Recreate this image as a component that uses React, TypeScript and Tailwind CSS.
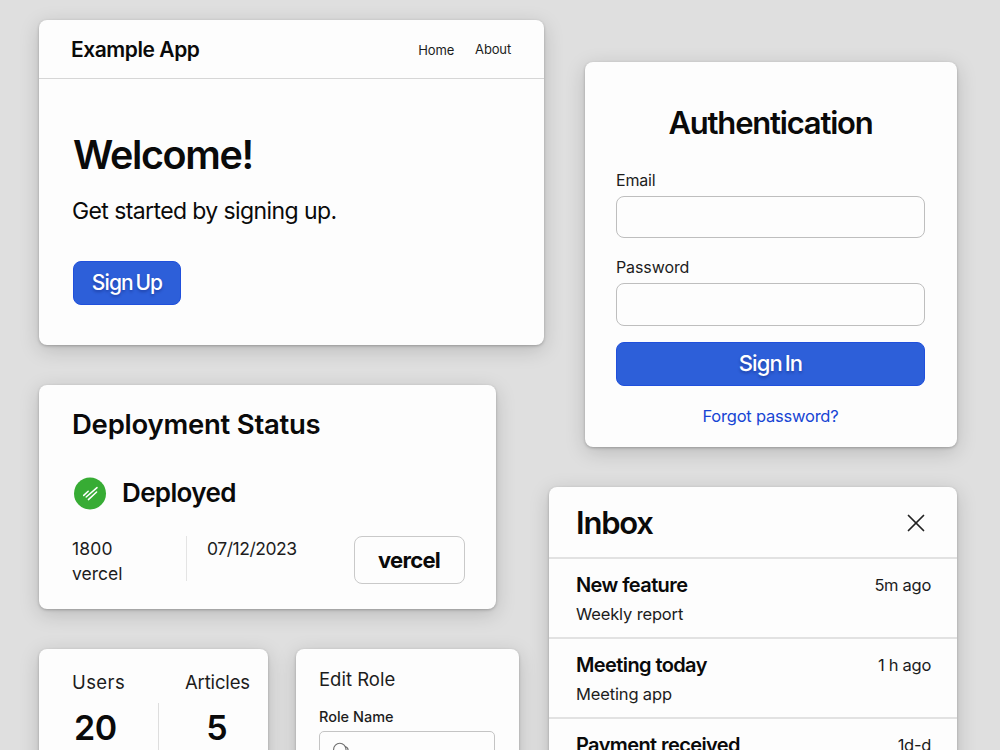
import { X } from 'lucide-react';

const MESSAGES = [
  { title: 'New feature', body: 'Weekly report', time: '5m ago' },
  { title: 'Meeting today', body: 'Meeting app', time: '1 h ago' },
  { title: 'Payment received', body: '', time: '1d-d' },
];

const CARD = 'shrink-0 bg-[#fdfdfd] rounded-[8px] shadow-[0_1px_3px_rgba(0,0,0,0.24),0_5px_20px_rgba(0,0,0,0.17)]';

function WelcomeCard() {
  return (
    <section className={`${CARD} h-[325px] w-[505px]`}>
      <header className="flex h-[59px] items-center justify-between border-b border-[#d6d6d6] pl-8 pr-[33px] pt-0.5">
        <h1 className="text-[21px] font-semibold tracking-[-0.45px]">Example App</h1>
        <nav className="flex gap-[21px] text-[13px] tracking-[-0.15px] text-[#1c1c1c]">
          <a className="pt-px">Home</a>
          <a>About</a>
        </nav>
      </header>
      <div className="pl-[34px] pt-[51px]">
        <h2 className="text-[39.5px] font-semibold leading-[51px] tracking-[-1.35px]">Welcome!</h2>
        <p className="-ml-px mt-[15px] text-[23px] leading-[31px] tracking-[-0.6px]">Get started by signing up.</p>
        <button className="mt-[34px] block h-[44px] w-[108px] rounded-[8px] border border-[#2050dc] bg-[#2d5fd9] text-[21px] font-medium tracking-[-0.9px] text-white [word-spacing:-2px] text-shadow-[0_2px_3px_rgba(0,0,60,0.3)]">
          Sign Up
        </button>
      </div>
    </section>
  );
}

function DeploymentCard() {
  return (
    <section className={`${CARD} mt-10 h-[224px] w-[457px] pl-[33px] pr-[31px] pt-[21px]`}>
      <h2 className="text-[27.5px] font-semibold leading-[36px] tracking-[-0.24px]">Deployment Status</h2>
      <div className="mt-[35px] flex h-8 items-center gap-4 pl-0.5">
        <svg width="33" height="33" viewBox="0 0 33 33" fill="none">
          <circle cx="16" cy="16.5" r="16" fill="#37ac34" />
          <g stroke="#fff" strokeWidth="1.5" strokeLinecap="round">
            <path d="M9.700 18.400L14.200 14.200" />
            <path d="M12.200 20L23 10.600" />
            <path d="M14.400 22.600L22.600 15" />
          </g>
        </svg>
        <span className="-mt-0.5 -ml-px text-[26px] font-semibold tracking-[-0.65px]">Deployed</span>
      </div>
      <div className="mt-[27px] flex items-start text-[17.5px] leading-[25px] text-[#1c1c1c]">
        <div className="h-[46px] w-[114px]">
          <span className="tracking-[0.2px]">1800</span>
          <br />
          vercel
        </div>
        <div className="h-[45px] w-[168px] border-l border-[#e4e4e4] pl-5 tracking-[-0.45px]">07/12/2023</div>
        <div className="flex h-[48px] w-[111px] items-center justify-center rounded-[8px] border border-[#c9c9c9] pr-px text-[22px] font-bold tracking-[-0.7px] text-[#0a0a0a]">
          vercel
        </div>
      </div>
    </section>
  );
}

function StatsCard() {
  return (
    <section className={`${CARD} flex h-[160px] w-[229px] pt-[21px]`}>
      <div className="w-[120px] pl-[33px]">
        <p className="text-[18.5px] leading-6 tracking-[0.4px] text-[#1c1c1c]">Users</p>
        <div className="mt-[9px] h-[60px] border-r border-[#dedede]">
          <p className="pl-[2px] pt-1 text-[34px] font-semibold leading-[42px] tracking-[-0.5px]">20</p>
        </div>
      </div>
      <div className="w-[109px] pl-[26px]">
        <p className="text-[18.5px] leading-6 tracking-[-0.15px] text-[#1c1c1c]">Articles</p>
        <p className="mt-[13px] w-[64px] text-center text-[34px] font-semibold leading-[42px]">5</p>
      </div>
    </section>
  );
}

function EditRoleCard() {
  return (
    <section className={`${CARD} h-[160px] w-[223px] px-[23px] pt-[18px]`}>
      <h3 className="text-[18.5px] leading-6 text-[#1c1c1c]">Edit Role</h3>
      <p className="mt-4 text-[14.5px] font-medium leading-5 text-[#1c1c1c]">Role Name</p>
      <div className="mt-1 h-[42px] w-[176px] rounded-[5px] border border-[#c4c4c4] pl-3 pt-[10px]">
        <svg width="20" height="18" viewBox="0 0 20 18" fill="none" stroke="#6f6f6f" strokeWidth="1.1">
          <circle cx="7.8" cy="7.500" r="6.200" />
          <path d="M12.800 4.600c1.800.200 3.200 1.600 3.400 3.800M12.400 11.800l5 5" />
        </svg>
      </div>
    </section>
  );
}

function AuthCard() {
  return (
    <section className={`${CARD} h-[385px] w-[372px] pl-[31px] pr-8 pt-[41px]`}>
      <h2 className="text-center text-[31px] font-semibold leading-10 tracking-[-1.2px]">Authentication</h2>
      <label className="mt-[27px] block text-[16px] leading-5 tracking-[-0.2px] text-[#1c1c1c]">Email</label>
      <input className="mt-1.5 block h-[42px] w-full rounded-[8px] border border-[#bebebe]" />
      <label className="mt-[19px] block text-[16px] leading-5 tracking-[-0.1px] text-[#1c1c1c]">Password</label>
      <input className="mt-1.5 block h-[43px] w-full rounded-[8px] border border-[#bebebe]" />
      <button className="mt-4 block h-[44px] w-full rounded-[8px] border border-[#2050dc] bg-[#2d5fd9] pb-px text-[22px] font-medium tracking-[-0.9px] text-white [word-spacing:-2px] text-shadow-[0_2px_3px_rgba(0,0,60,0.3)]">
        Sign In
      </button>
      <a className="mt-5 block text-center text-[16.5px] leading-5 tracking-[-0.22px] text-[#1745d4]">Forgot password?</a>
    </section>
  );
}

function InboxCard() {
  return (
    <section className={`${CARD} mt-[39.5px] h-[330px] w-[408px]`}>
      <header className="flex h-[70px] items-center justify-between pl-[27px] pr-[26px] pt-[3px]">
        <h2 className="text-[31px] font-semibold tracking-[-1.2px]">Inbox</h2>
        <X size={30} strokeWidth={1.4} className="text-[#222]" />
      </header>
      {MESSAGES.map((msg) => (
        <article key={msg.title} className="h-[80.3px] border-t-2 border-[#e2e2e2] pl-[27px] pr-[26px] pt-[13px]">
          <div className="flex items-center justify-between leading-[26px]">
            <h3 className="text-[20px] font-semibold tracking-[-0.6px]">{msg.title}</h3>
            <span className="text-[16.5px] tracking-[-0.3px] text-[#1c1c1c]">{msg.time}</span>
          </div>
          {msg.body && <p className="mt-1.5 text-[16.5px] leading-5 tracking-[-0.15px] text-[#1c1c1c]">{msg.body}</p>}
        </article>
      ))}
    </section>
  );
}

export default function App() {
  return (
    <main className="flex h-[750px] w-[1000px] gap-[5px] overflow-hidden bg-[#dfdfdf] pl-[39px] font-['Inter',sans-serif] text-[#0a0a0a]">
      <div className="w-[505px] shrink-0 pt-5">
        <WelcomeCard />
        <DeploymentCard />
        <div className="mt-10 flex gap-7">
          <StatsCard />
          <EditRoleCard />
        </div>
      </div>
      <div className="flex w-[408px] shrink-0 flex-col items-end pt-[62px]">
        <AuthCard />
        <InboxCard />
      </div>
    </main>
  );
}
